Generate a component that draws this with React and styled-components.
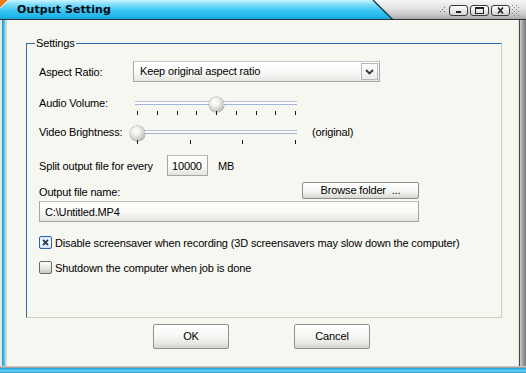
import React from "react";
import styled, { createGlobalStyle } from "styled-components";

const GlobalStyle = createGlobalStyle`
  html, body {
    margin: 0;
    padding: 0;
  }
  body {
    width: 526px;
    height: 373px;
    overflow: hidden;
    background: #f7f7f2;
    font-family: "Liberation Sans", Arial, sans-serif;
    font-size: 11px;
    letter-spacing: -0.15px;
    color: #000;
  }
  * {
    box-sizing: border-box;
  }
`;

const Window = styled.div`
  width: 526px;
  height: 373px;
  display: flex;
  flex-direction: column;
  background: #f7f7f2;
`;

const TitleBar = styled.div`
  height: 20px;
  display: flex;
  align-items: stretch;
  position: relative;
  background: linear-gradient(#f6f6f6 0%, #e2e2e2 45%, #c4c4c4 80%, #a8a8a8 100%);
  border-bottom: 1px solid #2c3438;
`;

const TitleTab = styled.div`
  width: 393px;
  padding-left: 17px;
  display: flex;
  align-items: center;
  clip-path: polygon(0 0, 374px 0, 393px 100%, 0 100%);
  background: linear-gradient(#c9f3ff 0%, #7adcfa 25%, #3cc7f3 55%, #22b6ea 85%, #1aa6dc 100%);
  font-family: "DejaVu Sans", Verdana, sans-serif;
  font-weight: bold;
  font-size: 11px;
  letter-spacing: 0.1px;
  color: #050a10;
`;

const TabEdge = styled.svg`
  position: absolute;
  left: 372px;
  top: 0;
`;

const Corner = styled.svg`
  position: absolute;
  left: 0;
  top: 0;
`;

const Controls = styled.div`
  margin-left: auto;
  margin-right: 4px;
  display: flex;
  align-items: flex-start;
  padding-top: 5px;
  gap: 2px;
`;

const Grip = styled.svg`
  margin-top: -1px;
`;

const CtrlButton = styled.div`
  width: 19px;
  height: 11px;
  border: 1px solid #3a3a3a;
  border-radius: 3px;
  background: linear-gradient(#fdfdfd, #d6d6d6);
  display: flex;
  align-items: center;
  justify-content: center;
`;

const Body = styled.div`
  flex: 1;
  display: flex;
`;

const LeftBorder = styled.div`
  width: 7px;
  background: linear-gradient(to right, #e6e6e6 0px, #e6e6e6 2px, #1a9ad6 2px, #38c0f0 4px, #7fd6f6 5px, #c8c8c8 5px, #dcdcdc 7px);
`;

const RightBorder = styled.div`
  width: 8px;
  background: linear-gradient(to right, #e4e4e0 0px, #e4e4e0 1px, #4a4a4a 1px, #4a4a4a 2px, #cfcfcf 2px, #9c9c9c 5px, #7a7a7a 8px);
`;

const BottomBorder = styled.div`
  height: 7px;
  background: linear-gradient(#dadada 0px, #8e8e8e 2px, #1c9cd8 2px, #3ec4f2 4px, #7ad6f6 5px, #1a90c8 7px);
`;

const Content = styled.div`
  flex: 1;
  padding: 23px 0 0 19px;
  display: flex;
  flex-direction: column;
`;

const GroupBox = styled.div`
  position: relative;
  width: 476px;
  height: 275px;
  border-top: 1px solid #2f6ea6;
  border-left: 1px solid #2f6ea6;
  border-right: 1px solid #d0d0bf;
  border-bottom: 1px solid #d0d0bf;
  padding: 17px 0 0 12px;
  display: flex;
  flex-direction: column;
`;

const Legend = styled.span`
  position: absolute;
  left: 8px;
  top: -7px;
  padding: 0 1px;
  line-height: 13px;
  background: #f7f7f2;
`;

const Row = styled.div`
  display: flex;
  align-items: ${(p) => p.$align || "center"};
  margin-top: ${(p) => p.$top || 0}px;
  height: ${(p) => p.$height}px;
  width: ${(p) => (p.$width ? `${p.$width}px` : "auto")};
  justify-content: ${(p) => p.$justify || "flex-start"};
`;

const Label = styled.span`
  width: ${(p) => (p.$width ? `${p.$width}px` : "auto")};
  line-height: 14px;
  white-space: nowrap;
  margin-top: ${(p) => p.$top || 0}px;
  margin-left: ${(p) => p.$left || 0}px;
`;

const Select = styled.div`
  width: 247px;
  height: 21px;
  display: flex;
  border: 1px solid #a7a6aa;
  border-top-color: #c8c8c8;
  background: linear-gradient(#ffffff 0%, #f8f8f6 60%, #e6e6e2 100%);
  padding: 1px;
`;

const SelectText = styled.span`
  flex: 1;
  padding-left: 5px;
  line-height: 17px;
`;

const SelectArrow = styled.div`
  width: 17px;
  border: 1px solid #b8b8b8;
  background: linear-gradient(#ffffff, #ececec);
  display: flex;
  align-items: center;
  justify-content: center;
`;

const Slider = styled.div`
  position: relative;
  width: 168px;
  height: 20px;
`;

const Track = styled.div`
  position: absolute;
  left: 4px;
  top: ${(p) => p.$top}px;
  width: 162px;
  height: 4px;
  border-top: 1px solid #b3bfd6;
  border-bottom: 1px solid #a3b3d3;
  background: #fbfbfb;
`;

const Thumb = styled.div`
  position: absolute;
  top: ${(p) => p.$top}px;
  width: 15px;
  height: 15px;
  border-radius: 50%;
  background: radial-gradient(circle at 40% 35%, #ffffff 0%, #f1f1ec 30%, #c9c9c2 65%, #8f8f88 100%);
  box-shadow: 0 0 0 0.5px #9a9a92;
`;

const Ticks = styled.div`
  position: absolute;
  left: 6px;
  top: ${(p) => p.$top}px;
  width: 159px;
  display: flex;
  justify-content: space-between;
`;

const Tick = styled.span`
  width: 1px;
  height: 4px;
  background: #1a1a1a;
`;

const TextBox = styled.div`
  width: ${(p) => p.$width}px;
  height: ${(p) => p.$height || 21}px;
  border: 1px solid #a6a6a0;
  border-top-color: #bdbdb8;
  background: linear-gradient(#ffffff 0%, #f9f9f7 55%, #e3e3de 100%);
  padding-left: ${(p) => p.$pad || 5}px;
  display: flex;
  align-items: center;
  margin-left: ${(p) => p.$left || 0}px;
  margin-top: ${(p) => p.$top || 0}px;
`;

const Button = styled.div`
  width: ${(p) => p.$width}px;
  height: ${(p) => p.$height}px;
  border: 1px solid #8e8f8f;
  border-radius: 2px;
  background: linear-gradient(#ffffff 0%, #f6f6f4 50%, #e6e6e2 80%, #d6d6d0 100%);
  display: flex;
  align-items: center;
  justify-content: center;
  line-height: 13px;
`;

const Check = styled.div`
  width: 13px;
  height: 13px;
  border: 1px solid ${(p) => (p.$checked ? "#2b65a8" : "#6a6a6a")};
  border-radius: 2px;
  background: ${(p) =>
    p.$checked
      ? "linear-gradient(#d6e7fb, #ffffff 50%, #cfe0f5)"
      : "linear-gradient(#ffffff, #e4e4e0 60%, #c8c8c4)"};
  display: flex;
  align-items: center;
  justify-content: center;
  margin-right: 3px;
`;

const ButtonRow = styled.div`
  display: flex;
  gap: 65px;
  margin-top: 6px;
  padding-left: 127px;
`;

const volumeTicks = 9;
const brightTicks = 4;

function TrackBar({ value, ticks }) {
  const left = 6 + value * 158 - 7;
  return (
    <Slider>
      <Track $top={5} />
      <Thumb $top={1} style={{ left }} />
      <Ticks $top={15}>
        {Array.from({ length: ticks }).map((_, i) => (
          <Tick key={i} />
        ))}
      </Ticks>
    </Slider>
  );
}

export default function App() {
  return (
    <Window>
      <GlobalStyle />
      <TitleBar>
        <TitleTab>Output Setting</TitleTab>
        <TabEdge width="24" height="20">
          <line x1="1" y1="0" x2="21" y2="20" stroke="#1b2a33" strokeWidth="1.2" />
        </TabEdge>
        <Corner width="10" height="10">
          <path d="M0 0 H8 L0 8 Z" fill="#f07a1a" />
          <line x1="0" y1="8.5" x2="8.5" y2="0" stroke="#ffffff" strokeWidth="1" />
        </Corner>
        <Controls>
          <Grip width="10" height="12">
            {[0, 1, 2, 3].map((r) =>
              [0, 1, 2, 3].map((c) =>
                (r + c) % 2 === 0 && c >= 3 - r ? (
                  <rect key={`${r}${c}`} x={c * 2 + 1} y={r * 2 + 1} width="1" height="1" fill="#777" />
                ) : null
              )
            )}
          </Grip>
          <CtrlButton>
            <svg width="9" height="7">
              <rect x="2" y="4" width="5" height="2" fill="#222" />
            </svg>
          </CtrlButton>
          <CtrlButton>
            <svg width="11" height="7">
              <rect x="1.5" y="0.5" width="8" height="6" fill="none" stroke="#222" />
              <rect x="2" y="1" width="7" height="1" fill="#222" />
            </svg>
          </CtrlButton>
          <CtrlButton>
            <svg width="9" height="7">
              <path d="M2 0.5 L7 6.5 M7 0.5 L2 6.5" stroke="#222" strokeWidth="1.6" />
            </svg>
          </CtrlButton>
          <Grip width="10" height="14">
            {[0, 1, 2, 3, 4, 5].map((r) =>
              [0, 1, 2, 3].map((c) =>
                (r + c) % 2 === 0 ? (
                  <rect key={`${r}${c}`} x={c * 2} y={r * 2 + 1} width="1" height="1" fill="#888" />
                ) : null
              )
            )}
          </Grip>
        </Controls>
      </TitleBar>
      <Body>
        <LeftBorder />
        <Content>
          <GroupBox>
            <Legend>Settings</Legend>
            <Row $height={21}>
              <Label $width={94}>Aspect Ratio:</Label>
              <Select>
                <SelectText>Keep original aspect ratio</SelectText>
                <SelectArrow>
                  <svg width="9" height="6">
                    <path d="M1 1 L4.5 4.5 L8 1" fill="none" stroke="#333" strokeWidth="1.8" />
                  </svg>
                </SelectArrow>
              </Select>
            </Row>
            <Row $height={20} $top={14} $align="flex-start">
              <Label $width={92}>Audio Volume:</Label>
              <TrackBar value={0.5} ticks={volumeTicks} />
            </Row>
            <Row $height={20} $top={9} $align="flex-start">
              <Label $width={92}>Video Brightness:</Label>
              <TrackBar value={0} ticks={brightTicks} />
              <Label $left={13}>(original)</Label>
            </Row>
            <Row $height={21} $top={10}>
              <Label $width={128}>Split output file for every</Label>
              <TextBox $width={41} $pad={4}>10000</TextBox>
              <Label $left={10}>MB</Label>
            </Row>
            <Row $height={17} $top={6} $width={380} $justify="space-between">
              <Label $top={3}>Output file name:</Label>
              <Button $width={117} $height={17}>Browse folder &nbsp;...</Button>
            </Row>
            <TextBox $width={380} $top={2}>C:\Untitled.MP4</TextBox>
            <Row $height={13} $top={14}>
              <Check $checked>
                <svg width="9" height="9">
                  <path d="M2 2 L7 7 M7 2 L2 7" stroke="#2a3f5a" strokeWidth="1.8" />
                </svg>
              </Check>
              <Label>Disable screensaver when recording (3D screensavers may slow down the computer)</Label>
            </Row>
            <Row $height={13} $top={12}>
              <Check />
              <Label>Shutdown the computer when job is done</Label>
            </Row>
          </GroupBox>
          <ButtonRow>
            <Button $width={76} $height={25}>OK</Button>
            <Button $width={76} $height={25}>Cancel</Button>
          </ButtonRow>
        </Content>
        <RightBorder />
      </Body>
      <BottomBorder />
    </Window>
  );
}
